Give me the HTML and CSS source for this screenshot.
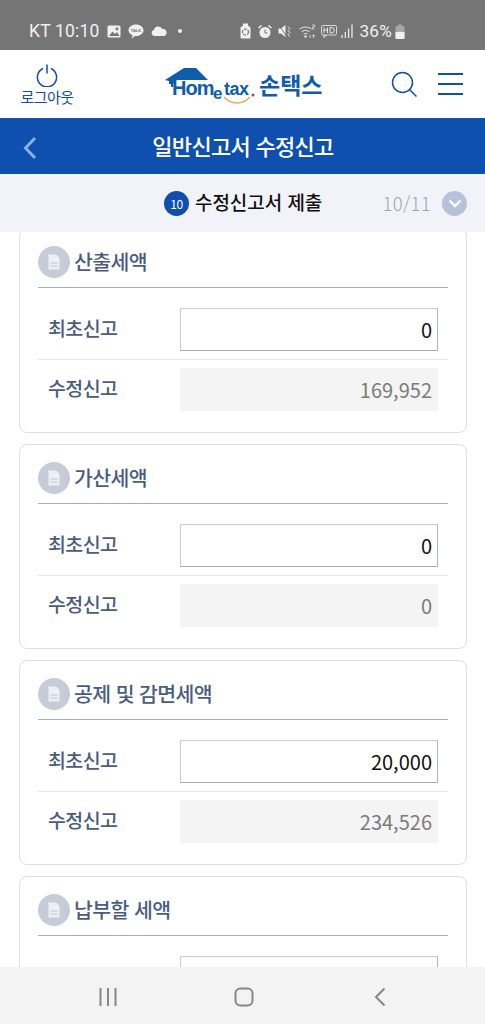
FILE: index.html
```html
<!DOCTYPE html>
<html lang="ko">
<head>
<meta charset="utf-8">
<title>일반신고서 수정신고</title>
<link rel="stylesheet" href="styles.css">
</head>
<body>
<div class="phone">
  <div class="status">
    <div class="status-left">
      <span class="st-text">KT 10:10</span>
      <svg width="14" height="13" viewBox="0 0 14 13"><rect x="0.500" y="0.500" width="13" height="12" rx="1.500" fill="#f0f0f0"/><path d="M2 11l3.500-4.500 2.500 2.500 2-2 2.500 4z" fill="#757575"/><circle cx="10" cy="4" r="1.400" fill="#757575"/></svg>
      <svg class="ic-talk" width="16" height="15" viewBox="0 0 16 15"><path d="M8 0.500c4.200 0 7.500 2.600 7.500 5.800s-3.300 5.800-7.500 5.800h-1l-3 2.400 0.500-3.200c-2.300-1-4-2.800-4-5 0-3.200 3.300-5.800 7.500-5.800z" fill="#f0f0f0"/><text x="8" y="8" class="talk-t">TALK</text></svg>
      <svg class="ic-cloud" width="16" height="10" viewBox="0 0 16 10"><path d="M3.500 10a3 3 0 0 1-.6-5.900 4.500 4.500 0 0 1 8.500-1 3.500 3.500 0 0 1 1.200 6.900z" fill="#f0f0f0"/></svg>
      <span class="dot"></span>
    </div>
    <div class="status-right">
      <svg width="11" height="16" viewBox="0 0 11 16"><path d="M3 0.500h5v2l2.500 2v10a1 1 0 0 1-1 1h-8a1 1 0 0 1-1-1v-10l2.500-2z" fill="#f0f0f0"/><circle cx="5.500" cy="9" r="3" fill="none" stroke="#757575" stroke-width="1.200" stroke-dasharray="3 1"/></svg>
      <svg class="ic-alarm" width="14" height="15" viewBox="0 0 14 14"><circle cx="7" cy="8" r="5.500" fill="#f0f0f0"/><path d="M7 5v3.500h2.500" fill="none" stroke="#757575" stroke-width="1"/><path d="M0.500 3.500l3-2.500M13.500 3.500l-3-2.500" stroke="#f0f0f0" stroke-width="1.600"/></svg>
      <svg class="ic-mute" width="14" height="14" viewBox="0 0 14 14"><path d="M0.500 4.500h2.500l4.500-3.500v12l-4.500-3.500h-2.500z" fill="#f0f0f0"/><path d="M1 1l8 12" stroke="#757575" stroke-width="1"/><path d="M10 2.500l2 2-2 2 2 2-2 2 1.500 2" fill="none" stroke="#f0f0f0" stroke-width="1"/></svg>
      <svg class="ic-wifi" width="18" height="15" viewBox="0 0 18 15"><path d="M0.500 5a10 10 0 0 1 12 0M2.500 7.500a7 7 0 0 1 8 0M4.500 10a4 4 0 0 1 4 0" fill="none" stroke="#e8e8e8" stroke-width="1"/><circle cx="6.500" cy="12.500" r="1.200" fill="#e8e8e8"/><path d="M13 1h2.500M15.500 1v2h-2v2h2M11 11v3M14.500 14v-3m-1.500 1.200l1.500-1.500 1.500 1.500" fill="none" stroke="#d8d8d8" stroke-width="0.900"/></svg>
      <svg class="ic-hd" width="16" height="14" viewBox="0 0 16 14"><rect x="0.500" y="1.500" width="15" height="9.500" rx="1.500" fill="none" stroke="#d8d8d8"/><path d="M3 3.500v5.500M3 6h3.500M6.500 3.500v5.500M9 3.500v5.500h1.500a2.700 2.700 0 0 0 0-5.500zM3 11l0 2.500 2.500-2.500" fill="none" stroke="#e8e8e8" stroke-width="1"/></svg>
      <svg class="ic-sig" width="12" height="14" viewBox="0 0 12 14"><path d="M1 11v3M4.300 8v6M7.600 4.500v9.500M11 0.500v13.500" fill="none" stroke="#e8e8e8" stroke-width="1.300"/></svg>
      <span class="st-text pct">36%</span>
      <svg class="ic-batt" width="10" height="15" viewBox="0 0 10 15"><path d="M3 0.500h4v1.500h1.500a1 1 0 0 1 1 1v11a1 1 0 0 1-1 1h-7a1 1 0 0 1-1-1v-11a1 1 0 0 1 1-1h1.500z" fill="#a6a6a6"/><path d="M0.500 8h9v6a1 1 0 0 1-1 1h-7a1 1 0 0 1-1-1z" fill="#f0f0f0"/></svg>
    </div>
  </div>

  <header class="topbar">
    <div class="logout">
      <svg width="22" height="23" viewBox="0 0 22 23"><path d="M7 4.500a9.600 9.600 0 1 0 8 0" fill="none" stroke="#0f4fad" stroke-width="1.500"/><path d="M11 0.500v9" stroke="#0f4fad" stroke-width="1.500"/></svg>
      <span>로그아웃</span>
    </div>
    <div class="logo">
      <svg class="logo-mark" width="158" height="38" viewBox="0 0 158 38">
        <path d="M0 13L19 1h12l12 12H12L8 17H4v-3z" fill="#0f5cab"/>
        <path d="M7 15v5" stroke="#0f5cab" stroke-width="2"/>
        <text x="7" y="28" class="lg-home">Hom</text>
        <text x="48" y="32" class="lg-e">e</text>
        <text x="59" y="28" class="lg-tax">tax</text>
        <circle cx="88" cy="28" r="1.500" fill="#666"/>
        <path d="M59 30c7 8 19 8 26 0" fill="none" stroke="#e9a94d" stroke-width="1.300"/>
        <text x="94" y="27" class="lg-kr">손택스</text>
      </svg>
    </div>
    <div class="top-actions">
      <svg width="26" height="26" viewBox="0 0 26 26"><circle cx="11.500" cy="11.500" r="10" fill="none" stroke="#0f4fad" stroke-width="1.500"/><path d="M18.500 18.500l7 7" stroke="#0f4fad" stroke-width="1.500"/></svg>
      <div class="menu"><i></i><i></i><i></i></div>
    </div>
  </header>

  <div class="titlebar">
    <svg class="back" width="14" height="24" viewBox="0 0 14 24"><path d="M12 2L2.500 12 12 22" fill="none" stroke="#8db0de" stroke-width="3"/></svg>
    <h1>일반신고서 수정신고</h1>
  </div>

  <div class="stepbar">
    <div class="step-name"><span class="step-no">10</span><strong>수정신고서 제출</strong></div>
    <div class="step-count">10/11</div>
    <span class="step-toggle"><svg width="14" height="9" viewBox="0 0 14 9"><path d="M1.500 1.500L7 7l5.500-5.500" fill="none" stroke="#fff" stroke-width="2.400"/></svg></span>
  </div>

  <main class="content">
    <section class="card first">
      <h2><span class="doc"><svg width="12" height="16" viewBox="0 0 12 16"><path d="M0.500 0.500h7.500l3.500 3.500v11.500h-11z" fill="#eef0f4"/><path d="M2.500 9h7M2.500 12h7" stroke="#bcc4d2" stroke-width="1"/></svg></span>산출세액</h2>
      <div class="row"><span class="lbl">최초신고</span><div class="val input">0</div></div>
      <div class="row"><span class="lbl">수정신고</span><div class="val ro">169,952</div></div>
    </section>
    <section class="card">
      <h2><span class="doc"><svg width="12" height="16" viewBox="0 0 12 16"><path d="M0.500 0.500h7.500l3.500 3.500v11.500h-11z" fill="#eef0f4"/><path d="M2.500 9h7M2.500 12h7" stroke="#bcc4d2" stroke-width="1"/></svg></span>가산세액</h2>
      <div class="row"><span class="lbl">최초신고</span><div class="val input">0</div></div>
      <div class="row"><span class="lbl">수정신고</span><div class="val ro">0</div></div>
    </section>
    <section class="card">
      <h2><span class="doc"><svg width="12" height="16" viewBox="0 0 12 16"><path d="M0.500 0.500h7.500l3.500 3.500v11.500h-11z" fill="#eef0f4"/><path d="M2.500 9h7M2.500 12h7" stroke="#bcc4d2" stroke-width="1"/></svg></span>공제 및 감면세액</h2>
      <div class="row"><span class="lbl">최초신고</span><div class="val input">20,000</div></div>
      <div class="row"><span class="lbl">수정신고</span><div class="val ro">234,526</div></div>
    </section>
    <section class="card">
      <h2><span class="doc"><svg width="12" height="16" viewBox="0 0 12 16"><path d="M0.500 0.500h7.500l3.500 3.500v11.500h-11z" fill="#eef0f4"/><path d="M2.500 9h7M2.500 12h7" stroke="#bcc4d2" stroke-width="1"/></svg></span>납부할 세액</h2>
      <div class="row"><span class="lbl"></span><div class="val input"></div></div>
    </section>
  </main>

  <nav class="navbar">
    <svg width="18" height="18" viewBox="0 0 18 18"><path d="M1.500 0v18M9 0v18M16.500 0v18" stroke="#868686" stroke-width="2"/></svg>
    <svg class="nav-home" width="20" height="20" viewBox="0 0 20 20"><rect x="1.500" y="1.500" width="17" height="17" rx="5" fill="none" stroke="#868686" stroke-width="2"/></svg>
    <svg width="12" height="20" viewBox="0 0 12 20"><path d="M10.500 1.500L2 10l8.500 8.500" fill="none" stroke="#868686" stroke-width="2"/></svg>
  </nav>
</div>
</body>
</html>
```
FILE: styles.css
```css
* { box-sizing: border-box; }
html, body { margin: 0; padding: 0; height: 100%; overflow: hidden; }
body { font-family: "Noto Sans CJK KR", "Noto Sans", sans-serif; background: #fff; }
.phone { width: 485px; height: 1024px; display: flex; flex-direction: column; overflow: hidden; }

.status { height: 50px; flex: none; background: #757575; display: flex; align-items: center; justify-content: space-between; padding: 12px 80px 0 29px; color: #f0f0f0; }
.status-left, .status-right { display: flex; align-items: center; }
.status-left { gap: 7px; }
.status-right { gap: 6.500px; }
.st-text { font-family: "Roboto", sans-serif; font-size: 17.500px; line-height: 20px; letter-spacing: 0.200px; white-space: nowrap; }
.pct { margin: 0 -3.500px 0 0; font-size: 17.200px; }
.ic-hd { margin-left: -2px; }
.ic-sig { margin-left: -3px; }
.talk-t { font: bold 4px "Liberation Sans", sans-serif; text-anchor: middle; fill: #757575; }
.dot { width: 4px; height: 4px; border-radius: 50%; background: #f0f0f0; margin-left: 4px; }

.topbar { height: 68px; flex: none; background: #fff; display: flex; align-items: center; padding: 0 22px 0 21px; position: relative; }
.logout { width: 52px; display: flex; flex-direction: column; align-items: center; color: #0f4fad; font-size: 15px; line-height: 16px; letter-spacing: -0.600px; white-space: nowrap; margin-top: 1px; }
.logout svg { margin-bottom: 2px; }
.logo { margin-left: 92px; margin-top: 4px; display: flex; }
.logo-mark { display: block; overflow: visible; }
.lg-home { font: bold 20px "Liberation Sans", sans-serif; fill: #0f5cab; letter-spacing: -1px; }
.lg-e { font: bold 17px "Liberation Sans", sans-serif; fill: #0f5cab; }
.lg-tax { font: bold 18px "Liberation Sans", sans-serif; fill: #0f5cab; letter-spacing: -0.500px; }
.lg-kr { font: 700 23px "Noto Sans CJK KR", sans-serif; fill: #0f5cab; }
.top-actions { margin-left: auto; display: flex; align-items: center; gap: 21px; }
.menu { width: 25px; height: 22px; display: flex; flex-direction: column; justify-content: space-between; }
.menu i { display: block; height: 2px; background: #0f4fad; }

.titlebar { height: 56px; flex: none; background: #0f4fad; display: flex; align-items: center; justify-content: center; position: relative; padding: 0 0 2px 1px; }
.titlebar h1 { margin: 0; color: #fff; font-size: 22px; font-weight: 500; letter-spacing: -0.700px; line-height: 30px; }
.back { position: absolute; left: 23px; top: 18px; }

.stepbar { height: 58px; flex: none; background: #f2f3f8; display: flex; align-items: center; padding: 0 18px 0 164px; position: relative; z-index: 2; }
.step-name { display: flex; align-items: center; gap: 6px; }
.step-no { width: 25px; height: 25px; border-radius: 50%; background: #0f4fad; color: #fff; font-size: 12px; letter-spacing: -0.300px; display: flex; align-items: center; justify-content: center; }
.step-name strong { font-size: 19px; font-weight: 500; color: #111; letter-spacing: -0.050px; white-space: nowrap; line-height: 26px; padding-bottom: 2px; }
.step-count { margin-left: auto; color: #9aa5b8; font-size: 18.500px; font-weight: 300; letter-spacing: 0.300px; margin-right: 11px; }
.step-toggle { width: 25px; height: 25px; border-radius: 50%; background: #b4c3da; display: flex; align-items: center; justify-content: center; }

.content { flex: 1; min-height: 0; overflow: hidden; padding: 0 18px; background: #fff; }
.card { border: 1px solid #dedfe3; border-radius: 8px; padding: 0 18px; height: 205px; margin: 0 0 11px 1px; background: #fff; }
.card.first { margin-top: -4px; }
.card h2 { margin: 0; height: 59px; padding-top: 17px; border-bottom: 1px solid #a9adb8; font-size: 20.500px; font-weight: 500; color: #4a5d80; letter-spacing: -0.600px; line-height: 30px; display: flex; align-items: flex-start; gap: 4px; white-space: nowrap; }
.doc { width: 32px; height: 32px; border-radius: 50%; background: #c5ccd8; display: flex; align-items: center; justify-content: center; flex: none; }
.row { display: flex; align-items: center; height: 60px; padding: 0 10px; }
.row + .row { border-top: 1px solid #e6e7ea; }
.card .row:first-of-type { height: 71px; padding-top: 12px; }
.lbl { width: 132px; flex: none; font-size: 19.500px; font-weight: 500; color: #4a5d80; letter-spacing: -0.600px; padding-bottom: 4px; }
.val { width: 258px; height: 43px; flex: none; text-align: right; font-size: 20px; line-height: 43px; padding: 0 6px; }
.input { border: 1px solid; border-color: #c8ccd8 #b0b3bd #a8abb5 #c8ccd8; background: #fff; color: #111; line-height: 41px; padding: 0 5px; }
.ro { background: #f4f4f4; color: #7b7b7b; font-weight: 400; }

.navbar { height: 57px; flex: none; background: #f3f3f3; display: flex; align-items: center; justify-content: space-between; padding: 3px 99px 0 99px; position: relative; z-index: 3; }
.nav-home { margin-left: -3px; }
```
